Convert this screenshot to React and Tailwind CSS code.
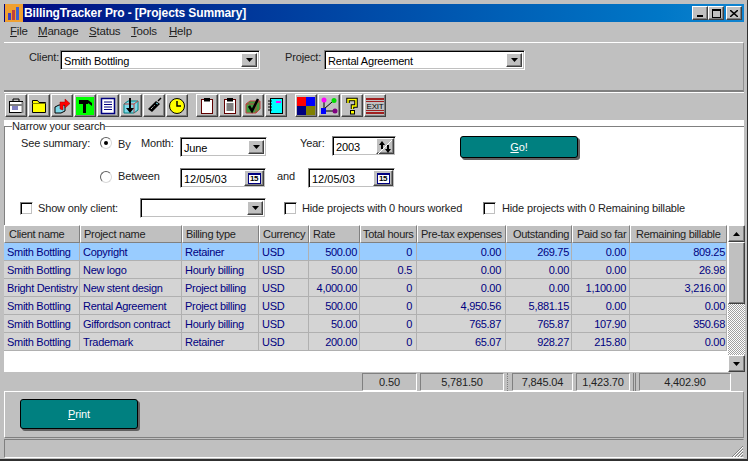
import React from "react";

const cols = "grid grid-cols-[76px_102px_77px_50px_51px_57px_89px_66px_58px_97px]";
const headerCells = [
  ["Client name", "pl-[4px]"],
  ["Project name", "pl-[3px]"],
  ["Billing type", "pl-[3px]"],
  ["Currency", "pl-[3px]"],
  ["Rate", "pl-[3px]"],
  ["Total hours", "pl-[2px]"],
  ["Pre-tax expenses", "pl-[3px]"],
  ["Outstanding", "pl-[6px]"],
  ["Paid so far", "pl-[4px]"],
  ["Remaining billable", "pl-[5px]"],
];
const cellAlign = [
  "pl-[3px]",
  "pl-[3px]",
  "pl-[3px]",
  "pl-[3px]",
  "text-right pr-[2px]",
  "text-right pr-[4px]",
  "text-right pr-[4px]",
  "text-right pr-[2px]",
  "text-right pr-[3px]",
  "text-right pr-[1px]",
];
const rows = [
  ["Smith Bottling", "Copyright", "Retainer", "USD", "500.00", "0", "0.00", "269.75", "0.00", "809.25"],
  ["Smith Bottling", "New logo", "Hourly billing", "USD", "50.00", "0.5", "0.00", "0.00", "0.00", "26.98"],
  ["Bright Dentistry", "New stent design", "Project billing", "USD", "4,000.00", "0", "0.00", "0.00", "1,100.00", "3,216.00"],
  ["Smith Bottling", "Rental Agreement", "Project billing", "USD", "500.00", "0", "4,950.56", "5,881.15", "0.00", "0.00"],
  ["Smith Bottling", "Giffordson contract", "Hourly billing", "USD", "50.00", "0", "765.87", "765.87", "107.90", "350.68"],
  ["Smith Bottling", "Trademark", "Retainer", "USD", "200.00", "0", "65.07", "928.27", "215.80", "0.00"],
];

const raised = "border border-t-white border-l-white border-r-[#404040] border-b-[#404040] shadow-[inset_-1px_-1px_0_#808080]";
const sunken = "border border-t-[#808080] border-l-[#808080] border-r-white border-b-white shadow-[inset_1px_1px_0_#000,inset_-1px_-1px_0_#c0c0c0]";

function Arrow() {
  return (
    <svg width="7" height="4" viewBox="0 0 7 4"><path d="M0 0h7L3.5 4z" fill="#000" /></svg>
  );
}
function DropBtn() {
  return (
    <div className={`w-[16px] h-full shrink-0 bg-[#c0c0c0] flex items-center justify-center ${raised}`}>
      <Arrow />
    </div>
  );
}
function Combo({ className, text }) {
  return (
    <div className={`flex bg-white p-[2px] h-[20px] ${sunken} ${className}`}>
      <div className="flex-1 pl-[1px] leading-[17px] text-black text-[11px] tracking-[-0.2px]">{text}</div>
      <DropBtn />
    </div>
  );
}
function Cal() {
  return (
    <div className={`w-[20px] h-full shrink-0 bg-[#c0c0c0] flex items-center justify-center ${raised}`}>
      <div className="w-[13px] h-[11px] border border-[#000080] border-t-2 bg-white text-[8px] leading-[8px] text-center text-black font-bold tracking-[-0.5px]">15</div>
    </div>
  );
}
function DateBox({ className }) {
  return (
    <div className={`flex bg-white p-[1px] h-[20px] ${sunken} ${className}`}>
      <div className="flex-1 pl-[2px] pt-[1px] leading-[16px] text-black text-[11px] tracking-[0px]">12/05/03</div>
      <Cal />
    </div>
  );
}
function Check({ className = "" }) {
  return <div className={`w-[13px] h-[13px] bg-white shrink-0 ${sunken} ${className}`} />;
}
function Radio({ on }) {
  return (
    <div className="w-[12px] h-[12px] rounded-full bg-white border border-t-[#606060] border-l-[#606060] border-r-[#d8d8d8] border-b-[#d8d8d8] shrink-0 flex items-center justify-center">
      {on && <div className="w-[4px] h-[4px] rounded-full bg-black" />}
    </div>
  );
}
function TealBtn({ children, className }) {
  return (
    <div className={`bg-[#008080] border border-black rounded-[3px] shadow-[2px_2px_0_#606060] text-white flex items-center justify-center ${className}`}>
      {children}
    </div>
  );
}

const S = ({ children }) => (
  <svg width="18" height="18" viewBox="0 0 18 18" className="block">{children}</svg>
);
const icons = [
  <S key="0"><path d="M6 4V2h6v2" fill="none" stroke="#000" /><rect x="2.5" y="4.5" width="13" height="11" fill="#fff" stroke="#000" /><path d="M2.5 8h13" stroke="#000" /><path d="M5 10h6M5 12h6" stroke="#000080" /><path d="M15.5 5v11" stroke="#808080" strokeWidth="2" /></S>,
  <S key="1"><path d="M2.5 15.5v-12h5l1.5 2h6.500v10z" fill="#ffff00" stroke="#000" /><path d="M2.500 6.500h13" stroke="#808000" /></S>,
  <S key="2"><path d="M2 10l4-2h6v6l-4 2H2z" fill="#7fd8e8" stroke="#000" /><path d="M7 12V5h5V2l5 4.500-5 4.500V8H10v5z" fill="#ff0000" stroke="#a00000" strokeWidth=".5" /></S>,
  <S key="3"><rect x="0" y="0" width="18" height="18" fill="#00ff00" /><path d="M3 3h9v4H10v9H7V7H3z" fill="#000" /><path d="M12 3l4 3 0 3-4-3z" fill="#000" /></S>,
  <S key="4"><rect x="2.500" y="1.500" width="13" height="15" fill="#fff" stroke="#000080" strokeWidth="1.500" /><path d="M5 5h8M5 7.500h8M5 10h8M5 12.500h8" stroke="#000080" /></S>,
  <S key="5"><path d="M2 7l4-3h10v9l-4 3H2z" fill="#7fd8e8" stroke="#008080" /><path d="M2 7h10v9M12 7l4-3" fill="none" stroke="#c04040" /><path d="M7 1h2v10h3l-4 5-4-5h3z" fill="#000" /></S>,
  <S key="6"><path d="M3 12l8-8 4 3-8 8z" fill="#000" /><path d="M13 4l3-3" stroke="#000" strokeWidth="1.500" /><path d="M6 12l4-4" stroke="#fff" strokeDasharray="1 1" /><path d="M11 6l2 1" stroke="#7fd8e8" /></S>,
  <S key="7"><circle cx="9" cy="9" r="7.500" fill="#ffff00" stroke="#000" /><path d="M9 4v5h4" fill="none" stroke="#000" strokeWidth="1.500" /></S>,
  <S key="8"><rect x="3.500" y="2.500" width="11" height="14" fill="#fff" stroke="#600000" /><rect x="6" y="1" width="6" height="3.500" fill="#000" /></S>,
  <S key="9"><rect x="3.500" y="2.500" width="11" height="14" fill="#fff" stroke="#600000" /><rect x="6" y="1" width="6" height="3.500" fill="#000" /><path d="M5.500 7h7M5.500 9h7M5.500 11h7M5.500 13h7" stroke="#000" /></S>,
  <S key="10"><path d="M2 7l4-3h10v8l-4 4H2z" fill="#40a040" stroke="#c04040" /><path d="M2 7h10v9M12 7l4-3" fill="none" stroke="#c04040" /><path d="M5 9l3 5 6-12" fill="none" stroke="#000" strokeWidth="2.500" /></S>,
  <S key="11"><rect x="3.500" y="1.500" width="12" height="15" fill="#00ffff" stroke="#000" /><path d="M1 4h4M1 7h4M1 10h4M1 13h4" stroke="#000" /><rect x="9" y="4" width="5" height="2" fill="#ff00ff" /></S>,
  <S key="12"><rect x="0" y="0" width="9" height="9" fill="#ff0000" /><rect x="9" y="0" width="9" height="9" fill="#0000ff" /><rect x="0" y="9" width="9" height="9" fill="#000080" /><rect x="9" y="9" width="9" height="9" fill="#808000" /></S>,
  <S key="13"><path d="M4 4v10h9M4 12l8-7" fill="none" stroke="#000" /><circle cx="4" cy="3" r="2.500" fill="#ff00ff" /><circle cx="14" cy="3.500" r="2.500" fill="#00dd00" /><rect x="1" y="11" width="5" height="6" fill="#0000ff" /><circle cx="15" cy="14" r="2.500" fill="#800080" /></S>,
  <S key="14"><path d="M5 6V2.500h8V9H9.500v3" fill="none" stroke="#000" strokeWidth="3.500" /><path d="M5 6V2.500h8V9H9.500v3" fill="none" stroke="#ffff00" strokeWidth="1.500" /><rect x="7.500" y="13.500" width="4" height="3.500" fill="#ffff00" stroke="#000" /></S>,
  <S key="15"><rect x="0" y="1" width="18" height="2" fill="#a02020" /><rect x="0" y="4" width="18" height="1" fill="#a02020" /><rect x="0" y="13" width="18" height="1" fill="#a02020" /><rect x="0" y="15" width="18" height="2" fill="#a02020" /><text x="9" y="11.500" textAnchor="middle" fontSize="8" letterSpacing="-0.2" fontFamily="Liberation Sans, sans-serif" fill="#000">EXIT</text></S>,
];
function ToolBtn({ icon }) {
  return (
    <div className={`w-[22px] h-[23px] bg-[#c0c0c0] flex items-center justify-center ${raised}`}>
      {icon}
    </div>
  );
}

const totalCell = "border border-t-[#808080] border-l-[#808080] border-r-white border-b-white text-center leading-[16px]";

export default function App() {
  return (
    <div className="w-[748px] h-[461px] overflow-hidden bg-[#c0c0c0] flex flex-col pt-[4px] pl-[4px] pr-[3px] border-r border-b-2 border-r-[#303030] border-b-[#303030] text-[11px] tracking-[-0.15px] text-[#222] font-['Liberation_Sans',sans-serif]">
      {/* title */}
      <div className="h-[18px] shrink-0 flex items-center bg-gradient-to-r from-[#000080] to-[#1084d0] pr-[2px]">
        <svg width="18" height="18" viewBox="0 0 18 18" className="shrink-0 ml-[1px]">
          <rect width="18" height="18" fill="#f0a030" />
          <rect x="3" y="9" width="3" height="7" fill="#4040c0" />
          <rect x="7" y="6" width="3" height="10" fill="#c04040" />
          <rect x="11" y="3" width="3" height="13" fill="#4060d0" />
        </svg>
        <div className="ml-[1px] text-white font-bold text-[12px] tracking-[-0.12px] leading-[18px]">BillingTracker Pro - [Projects Summary]</div>
        <div className="ml-auto flex">
          <div className={`w-[16px] h-[14px] bg-[#c0c0c0] flex items-end justify-center pb-[2px] ${raised}`}><div className="w-[6px] h-[2px] bg-black" /></div>
          <div className={`w-[16px] h-[14px] bg-[#c0c0c0] flex items-center justify-center ${raised}`}><div className="w-[9px] h-[9px] border border-t-2 border-black" /></div>
          <div className={`ml-[2px] w-[16px] h-[14px] bg-[#c0c0c0] flex items-center justify-center ${raised}`}>
            <svg width="8" height="7" viewBox="0 0 8 7"><path d="M0 0l8 7M8 0L0 7" stroke="#000" strokeWidth="1.500" /></svg>
          </div>
        </div>
      </div>
      {/* menu */}
      <div className="h-[20px] shrink-0 flex items-center pl-[6px] text-[11.5px] tracking-[-0.2px]">
        <span className="w-[28px]"><u>F</u>ile</span>
        <span className="w-[51px]"><u>M</u>anage</span>
        <span className="w-[42px]"><u>S</u>tatus</span>
        <span className="w-[38px]"><u>T</u>ools</span>
        <span><u>H</u>elp</span>
      </div>
      {/* selector panel */}
      <div className="h-[50px] shrink-0 border-t border-t-white border-r border-r-[#909090] border-b-2 border-b-[#808080] flex items-start pt-[7px] pl-[25px]">
        <span className="leading-[14px] w-[31px]">Client:</span>
        <Combo className="w-[200px]" text="Smith Bottling" />
        <span className="leading-[14px] ml-[25px] w-[39px]">Project:</span>
        <Combo className="w-[201px]" text="Rental Agreement" />
      </div>
      <div className="h-[1px] shrink-0 bg-white" />
      {/* toolbar */}
      <div className="h-[27px] shrink-0 flex items-start pl-[1px] pt-[1px]">
        <div className="flex gap-[1px]">{icons.slice(0, 8).map((ic, i) => <ToolBtn key={i} icon={ic} />)}</div>
        <div className="flex gap-[1px] ml-[8px]">{icons.slice(8, 12).map((ic, i) => <ToolBtn key={i} icon={ic} />)}</div>
        <div className="flex gap-[1px] ml-[8px]">{icons.slice(12).map((ic, i) => <ToolBtn key={i} icon={ic} />)}</div>
      </div>
      {/* search */}
      <div className="h-[105px] shrink-0 bg-white overflow-hidden">
        <fieldset className="h-full border-t border-t-[#808080] border-l border-l-[#808080] pl-[15px] pr-0 pt-0">
          <legend className="ml-[-8px] px-0 text-[11px] leading-[12px]">Narrow your search</legend>
          <div className="flex items-start h-[36px] pt-[4px]">
            <span className="ml-[1px] w-[79px] leading-[14px]">See summary:</span>
            <div className="pt-[1px]"><Radio on /></div>
            <span className="ml-[6px] w-[23px] leading-[14px] pt-[1px]">By</span>
            <span className="w-[39px] leading-[14px]">Month:</span>
            <Combo className="w-[87px] mt-[1px]" text="June" />
            <span className="ml-[33px] w-[32px] leading-[14px]">Year:</span>
            <div className={`flex bg-white p-[1px] h-[20px] w-[64px] ${sunken}`}>
              <div className="flex-1 pl-[2px] pt-[1px] leading-[16px] text-black">2003</div>
              <div className={`w-[18px] h-full bg-[#c0c0c0] ${raised}`}>
                <svg width="16" height="16" viewBox="0 0 16 16"><path d="M1 15L15 1" stroke="#fff" /><path d="M5 2L2 6h2v4h2V6h2z" fill="#000" /><path d="M11 14l3-4h-2V6h-2v4H8z" fill="#000" /></svg>
              </div>
            </div>
            <TealBtn className="ml-[64px] w-[118px] h-[22px]"><span><u>G</u>o!</span></TealBtn>
          </div>
          <div className="flex items-start h-[30px]">
            <div className="ml-[80px] pt-[3px]"><Radio /></div>
            <span className="ml-[6px] w-[62px] pt-[1px] leading-[14px]">Between</span>
            <DateBox className="w-[86px]" />
            <span className="ml-[11px] w-[31px] pt-[1px] leading-[14px]">and</span>
            <DateBox className="w-[87px]" />
          </div>
          <div className="flex items-center h-[20px]">
            <Check />
            <span className="ml-[5px] w-[102px]">Show only client:</span>
            <Combo className="w-[126px]" text="" />
            <Check className="ml-[18px]" />
            <span className="ml-[5px] w-[181px]">Hide projects with 0 hours worked</span>
            <Check />
            <span className="ml-[6px]">Hide projects with 0 Remaining billable</span>
          </div>
        </fieldset>
      </div>
      {/* grid */}
      <div className="h-[147px] shrink-0 flex bg-white tracking-[-0.3px]">
        <div className="w-[723px] shrink-0">
          <div className={`${cols} h-[18px] bg-[#c0c0c0]`}>
            {headerCells.map(([t, c]) => (
              <div key={t} className={`${c} whitespace-nowrap overflow-hidden leading-[16px] border border-t-white border-l-white border-r-[#808080] border-b-[#808080]`}>{t}</div>
            ))}
          </div>
          {rows.map((r, i) => (
            <div key={i} className={`${cols} h-[18px] text-[#000080] ${i === 0 ? "bg-[#99ccff]" : "bg-[#d4d4d4]"}`}>
              {r.map((v, j) => (
                <div key={j} className={`${cellAlign[j]} whitespace-nowrap overflow-hidden leading-[19px] border-r border-b border-r-[#b0b0b0] border-b-[#b0b0b0]`}>{v}</div>
              ))}
            </div>
          ))}
        </div>
        <div className="ml-[1px] w-[17px] shrink-0 flex flex-col bg-[repeating-conic-gradient(#a0a0a0_0_25%,#ffffff_0_50%)] bg-[length:2px_2px]">
          <div className={`h-[17px] bg-[#c0c0c0] flex items-center justify-center ${raised}`}><div className="rotate-180 flex"><Arrow /></div></div>
          <div className={`h-[62px] bg-[#c0c0c0] ${raised}`} />
          <div className="flex-1" />
          <div className={`h-[17px] bg-[#c0c0c0] flex items-center justify-center ${raised}`}><Arrow /></div>
        </div>
      </div>
      {/* totals */}
      <div className="h-[19px] shrink-0 flex items-stretch pt-[1px]">
        <div className={`ml-[358px] w-[55px] ${totalCell}`}>0.50</div>
        <div className={`ml-[3px] w-[84px] ${totalCell}`}>5,781.50</div>
        <div className="ml-[3px] w-[2px] border-l border-l-[#808080] border-dotted" />
        <div className={`ml-[3px] w-[61px] ${totalCell}`}>7,845.04</div>
        <div className={`ml-[3px] w-[54px] ${totalCell}`}>1,423.70</div>
        <div className="ml-[3px] w-[3px] border-l border-r border-l-[#808080] border-r-[#808080]" />
        <div className={`ml-[3px] w-[92px] ${totalCell}`}>4,402.90</div>
      </div>
      {/* print panel */}
      <div className="h-[47px] shrink-0 border-t border-l border-t-white border-l-white border-r border-r-[#909090] border-b border-b-[#808080] pl-[15px] pt-[7px]">
        <TealBtn className="w-[118px] h-[30px]"><span><u>P</u>rint</span></TealBtn>
      </div>
      {/* status */}
      <div className="h-[19px] shrink-0 mt-[1px] border border-t-[#808080] border-l-[#808080] border-r-[#c0c0c0] border-b-white flex justify-end items-end overflow-hidden">
        <svg width="14" height="14" viewBox="0 0 14 14" className="block"><path d="M3 14L14 3M6 14L14 6M9 14l5-5M12 14l2-2" stroke="#808080" strokeWidth="1" /><path d="M4 14L14 4M7 14l7-7M10 14l4-4" stroke="#ffffff" strokeWidth="1" /></svg>
      </div>
    </div>
  );
}
